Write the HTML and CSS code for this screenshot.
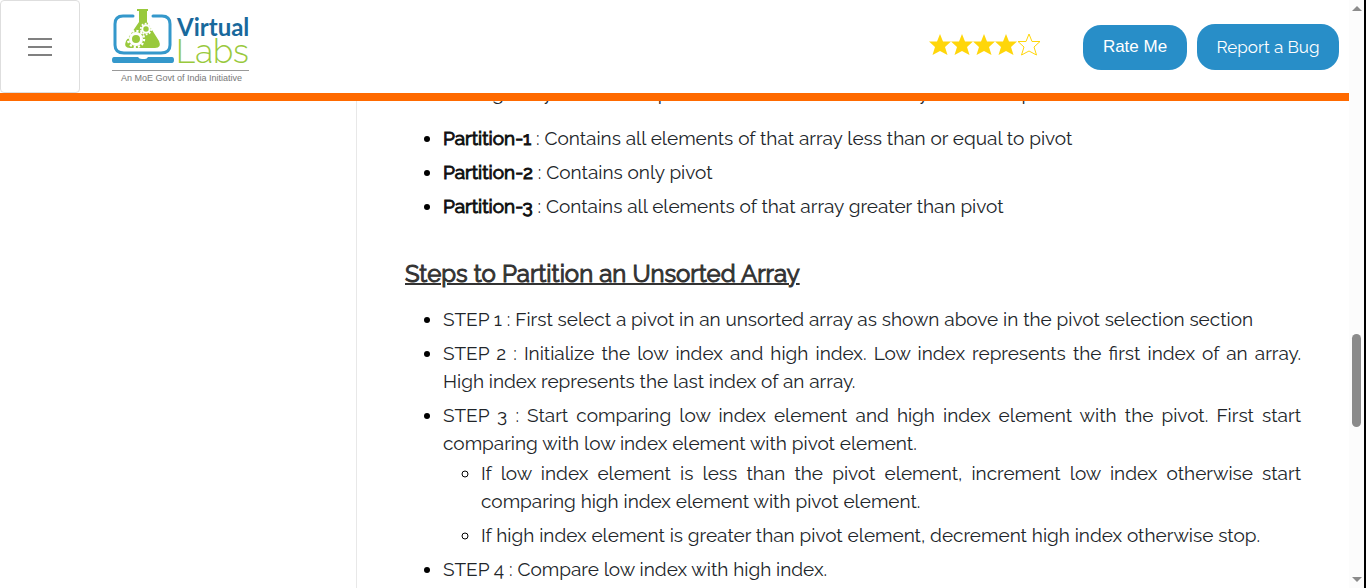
FILE: index.html
```html
<!DOCTYPE html>
<html lang="en">
<head>
<meta charset="utf-8">
<title>Virtual Labs</title>
<link rel="stylesheet" href="styles.css">
</head>
<body>
<div class="window">
  <div class="page">
    <header class="header">
      <button class="menu" type="button" aria-label="Menu"><span class="menu-line"></span><span class="menu-line"></span><span class="menu-line"></span></button>
      <a class="logo" href="#" aria-label="Virtual Labs">
        <svg width="140" height="78" viewBox="0 0 140 78">
          <g fill="none" stroke="#3498cb" stroke-width="3" stroke-linecap="round">
            <path d="M21 8H11Q3 8 3 16V37Q3 45 12 45H49Q58 45 58 37V16Q58 8 50 8H41"/>
          </g>
          <path d="M2 49H26Q27 51 30 51H33Q35 51 36 49H60Q62 49 62 52T60 55H2Q0 55 0 52T2 49Z" fill="#3498cb"/>
          <path d="M25 1H36V3H35V14L47 33Q50 40 43 40H18Q11 40 14 33L27 14V3H25Z" fill="#99c93c"/>
          <g fill="none" stroke="#fff">
            <circle cx="24" cy="31" r="5.5" stroke-width="3"/>
            <circle cx="24" cy="31" r="8" stroke-width="2.4" stroke-dasharray="2.2 2"/>
            <circle cx="34" cy="21" r="3.7" stroke-width="2"/>
            <circle cx="34" cy="21" r="5.3" stroke-width="1.8" stroke-dasharray="1.8 1.5"/>
          </g>
          <text class="logo-virtual" x="65" y="28">Virtual</text>
          <text class="logo-labs" x="64" y="55">Labs</text>
          <path d="M0 62.500H137" stroke="#999" stroke-width="1"/>
          <text class="logo-tag" x="9" y="73">An MoE Govt of India Initiative</text>
        </svg>
      </a>
      <div class="rating" role="img" aria-label="4 out of 5 stars">
        <svg class="star" viewBox="0 0 22 22"><path d="M11 0L14 7.500H22L16 13L18.500 21L11 17L3.500 21L6 13L0 7.500H8Z"/></svg>
        <svg class="star" viewBox="0 0 22 22"><path d="M11 0L14 7.500H22L16 13L18.500 21L11 17L3.500 21L6 13L0 7.500H8Z"/></svg>
        <svg class="star" viewBox="0 0 22 22"><path d="M11 0L14 7.500H22L16 13L18.500 21L11 17L3.500 21L6 13L0 7.500H8Z"/></svg>
        <svg class="star" viewBox="0 0 22 22"><path d="M11 0L14 7.500H22L16 13L18.500 21L11 17L3.500 21L6 13L0 7.500H8Z"/></svg>
        <svg class="star star-empty" viewBox="-1 -1 24 24"><path d="M11 0L14 7.500H22L16 13L18.500 21L11 17L3.500 21L6 13L0 7.500H8Z"/></svg>
      </div>
      <div class="actions">
        <button class="button rate" type="button">Rate Me</button>
        <button class="button report" type="button">Report a Bug</button>
      </div>
    </header>
    <div class="body">
      <aside class="sidebar"></aside>
      <main class="content">
        <p class="intro">Partitioning array around the pivot element divides the array into three parts.</p>
        <ul class="list">
          <li><strong>Partition-1</strong> : Contains all elements of that array less than or equal to pivot</li>
          <li><strong>Partition-2</strong> : Contains only pivot</li>
          <li><strong>Partition-3</strong> : Contains all elements of that array greater than pivot</li>
        </ul>
        <h2 class="heading">Steps to Partition an Unsorted Array</h2>
        <ul class="list">
          <li>STEP 1 : First select a pivot in an unsorted array as shown above in the pivot selection section</li>
          <li>STEP 2 : Initialize the low index and high index. Low index represents the first index of an array. High index represents the last index of an array.</li>
          <li>STEP 3 : Start comparing low index element and high index element with the pivot. First start comparing with low index element with pivot element.
            <ul class="list nested">
              <li>If low index element is less than the pivot element, increment low index otherwise start comparing high index element with pivot element.</li>
              <li>If high index element is greater than pivot element, decrement high index otherwise stop.</li>
            </ul>
          </li>
          <li>STEP 4 : Compare low index with high index.</li>
        </ul>
      </main>
    </div>
  </div>
  <div class="scrollbar" aria-hidden="true">
    <span class="arrow arrow-up"></span>
    <span class="track"></span>
    <span class="thumb"></span>
    <span class="track track-end"></span>
    <span class="arrow arrow-down"></span>
  </div>
</div>
</body>
</html>
```
FILE: styles.css
```css
* { box-sizing: border-box; }
body {
  margin: 0;
  background: #fff;
  color: #212529;
  font: 19px/28px Raleway, Lato, sans-serif;
}
.window { display: flex; height: 100vh; overflow: hidden; }
.page { flex: 1; min-width: 0; display: flex; flex-direction: column; }
.header {
  flex: none;
  display: flex;
  align-items: center;
  height: 101px;
  padding-right: 10px;
  background: #fff;
  border-bottom: 8px solid #ff6a00;
  z-index: 1;
}
.menu {
  display: flex;
  flex-direction: column;
  align-items: center;
  justify-content: center;
  gap: 6px;
  width: 80px;
  height: 93px;
  padding: 0;
  background: #fff;
  border: 1px solid #dedede;
  border-radius: 4px;
}
.menu-line { width: 24px; height: 2px; background: #808080; }
.logo { margin-left: 32px; height: 78px; }
.logo svg { display: block; overflow: visible; }
.logo-virtual { font: 700 24px Lato, sans-serif; fill: #19699c; }
.logo-labs { font: 300 33px Raleway, Lato, sans-serif; fill: #99c93c; }
.logo-tag { font: 9px "Liberation Sans", sans-serif; fill: #777; }
.rating { display: flex; align-items: center; margin-left: auto; padding-bottom: 3px; }
.star { width: 22px; height: 22px; fill: #ffd60a; }
.star-empty { width: 24px; height: 24px; fill: none; stroke: #ffd60a; stroke-width: 1; }
.actions { display: flex; align-items: flex-end; gap: 10px; margin-left: 42px; }
.button {
  height: 46px;
  padding: 0;
  border: 0;
  border-radius: 18px;
  background: #288ec8;
  color: #fff;
}
.rate { width: 104px; height: 45px; font: 17px "Liberation Sans", sans-serif; }
.report { width: 142px; font: 17px Raleway, Lato, sans-serif; }
.body { flex: 1; min-height: 0; display: flex; }
.sidebar { width: 357px; flex: none; border-right: 1px solid #e8e8e8; }
.content { flex: 1; min-width: 0; padding: 0 48px; text-align: justify; }
.intro { margin: -22px 0 17px; }
.list { margin: 0; padding-left: 38px; }
.list li { margin-bottom: 6px; color: #212529; }
.list li::marker { color: #000; }
.nested { margin-top: 2px; }
.list strong { font-weight: 400; color: #111; -webkit-text-stroke: 1px #111; }
.heading {
  margin: 36px 0 13px;
  font-size: 24px;
  line-height: 36px;
  font-weight: 400;
  color: #333;
  -webkit-text-stroke: 1px #333;
  text-decoration: underline;
  text-decoration-thickness: 2px;
}
.scrollbar {
  flex: none;
  display: flex;
  flex-direction: column;
  align-items: center;
  width: 17px;
  padding: 6px 0;
  background: #fcfcfc;
  border-right: 2px solid #000;
}
.arrow { border: 5px solid transparent; border-top-width: 0; border-bottom-width: 0; }
.arrow-up { border-bottom: 5px solid #8b8b8b; }
.arrow-down { border-top: 5px solid #8b8b8b; }
.track { flex: 322; }
.track-end { flex: 150; }
.thumb { width: 9px; height: 93px; border-radius: 5px; background: #8b8b8b; }
```
